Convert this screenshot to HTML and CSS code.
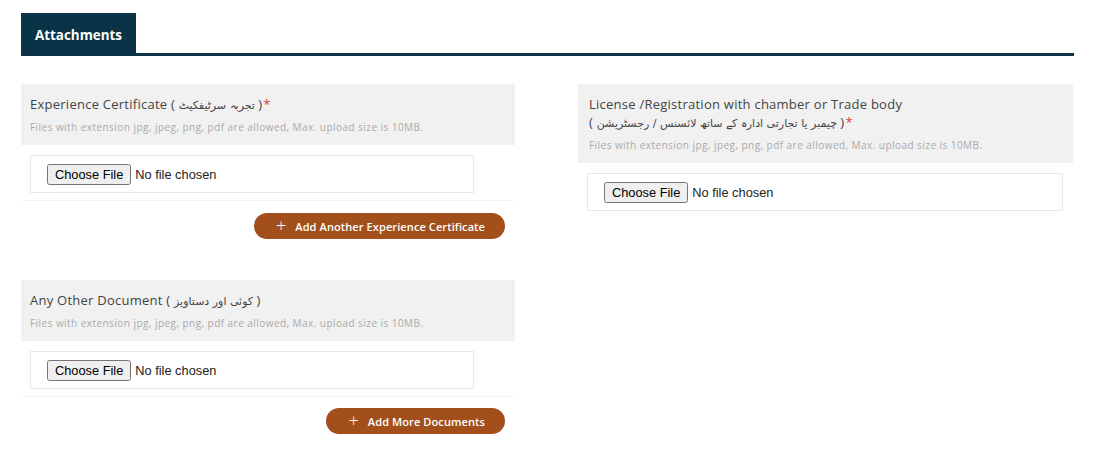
FILE: index.html
```html
<!DOCTYPE html>
<html>
<head>
<meta charset="utf-8">
<link rel="stylesheet" href="styles.css">
</head>
<body>
<div class="page">
  <div class="tabs">
    <div class="tab">Attachments</div>
  </div>
  <div class="grid">
    <div class="col col-left">
      <div class="field">
        <div class="field-head">
          <div class="label">Experience Certificate ( <span class="ur">تجربہ سرٹیفکیٹ</span> )<span class="req">*</span></div>
          <div class="hint">Files with extension jpg, jpeg, png, pdf are allowed, Max. upload size is 10MB.</div>
        </div>
        <div class="field-body">
          <div class="file-box"><input type="file" class="file"></div>
        </div>
      </div>
      <div class="actions"><button class="add-btn"><span class="plus">+</span>Add Another Experience Certificate</button></div>

      <div class="field">
        <div class="field-head">
          <div class="label">Any Other Document ( <span class="ur">کوئی اور دستاویز</span> )</div>
          <div class="hint">Files with extension jpg, jpeg, png, pdf are allowed, Max. upload size is 10MB.</div>
        </div>
        <div class="field-body">
          <div class="file-box"><input type="file" class="file"></div>
        </div>
      </div>
      <div class="actions actions-last"><button class="add-btn"><span class="plus">+</span>Add More Documents</button></div>
    </div>

    <div class="col col-right">
      <div class="field">
        <div class="field-head">
          <div class="label">License /Registration with chamber or Trade body<br>( <span class="ur">چیمبر یا تجارتی ادارہ کے ساتھ لائسنس / رجسٹریشن</span> )<span class="req">*</span></div>
          <div class="hint">Files with extension jpg, jpeg, png, pdf are allowed, Max. upload size is 10MB.</div>
        </div>
        <div class="field-body">
          <div class="file-box"><input type="file" class="file"></div>
        </div>
      </div>
    </div>
  </div>
</div>
</body>
</html>
```

FILE: styles.css
```css
* { box-sizing: border-box; }
html, body { margin: 0; padding: 0; background: #fff; }
body { font-family: "Open Sans", "DejaVu Sans", sans-serif; color: #444; }
.page { padding: 13px 43px 0 21px; width: 1117px; }
.tabs { border-bottom: 3px solid #0d3346; height: 43px; }
.tab {
  display: inline-block; background: #0b3347; color: #fff;
  font-weight: 700; font-size: 13.4px; height: 40px; line-height: 44px;
  padding: 0 14px; width: 115px;
}
.grid { display: flex; gap: 63px; margin-top: 28px; }
.col-left { width: 494px; }
.col-right { width: 495px; }
.field-head { background: #f1f1f1; padding: 11px 9px 11px; }
.col-right .field-head { padding-left: 11px; }
.label { font-size: 13px; letter-spacing: 0.25px; color: #444; line-height: 18px; }
.ur { font-family: "DejaVu Sans", sans-serif; font-size: 11px; letter-spacing: 0; }
.req { color: #d9383a; margin-left: 1px; }
.hint { font-size: 10px; letter-spacing: 0.45px; color: #aaa; margin-top: 6px; line-height: 13px; }
.field-body { padding: 10px 0 7px 9px; border-bottom: 1px solid #f4f4f4; }
.col-left .file-box { width: 444px; }
.col-right .file-box { width: 476px; }
.col-right .field-body { border-bottom: none; padding-top: 10px; }
.file-box { border: 1px solid #e8e8e8; height: 38px; padding: 0 16px; display: flex; align-items: center; }
.file { font-family: "Liberation Sans", Arial, sans-serif; font-size: 12.8px; color: #222; }
.actions { display: flex; justify-content: flex-end; padding: 12px 10px 0 0; height: 79px; }
.actions-last { height: 40px; padding-top: 11px; }
.add-btn {
  background: #a24f1c; color: #fff; border: none; border-radius: 14px;
  height: 26px; padding: 0 20px 0 22px; font-family: "Open Sans", sans-serif;
  font-weight: 600; font-size: 11px; letter-spacing: 0.1px; display: flex; align-items: center; cursor: pointer;
}
.plus { font-size: 18px; font-weight: 300; margin-right: 9px; line-height: 1; margin-top: -2px; }
```
